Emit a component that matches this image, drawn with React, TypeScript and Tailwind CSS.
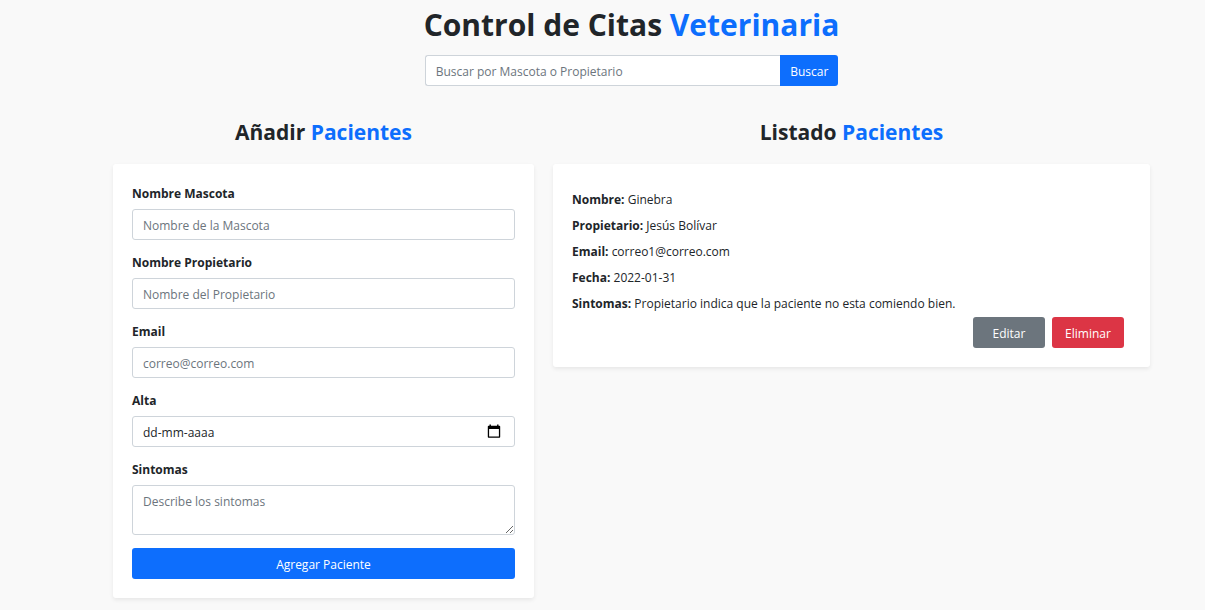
import type { InputHTMLAttributes, ReactNode } from "react";

const control =
  "w-full rounded-[3px] border border-[#ced4da] bg-white px-[10px] text-[#212529] placeholder:text-[#6c757d] outline-none focus:border-blue-400";

function Heading({ first, second }: { first: string; second: string }) {
  return (
    <h2 className="mb-[18px] text-center text-[21px] leading-7 font-bold">
      {first} <span className="text-[#0d6efd]">{second}</span>
    </h2>
  );
}

function Group({ id, label, children }: { id: string; label: string; children: ReactNode }) {
  return (
    <div className="mb-[13px] flex flex-col">
      <label htmlFor={id} className="mb-[6px] self-start leading-[19px] font-bold">
        {label}
      </label>
      {children}
    </div>
  );
}

function Field({ id, label, ...rest }: { id: string; label: string } & InputHTMLAttributes<HTMLInputElement>) {
  return (
    <Group id={id} label={label}>
      <input id={id} className={`${control} h-[31px] pt-[2px]`} {...rest} />
    </Group>
  );
}

function CalendarIcon() {
  return (
    <svg width="14" height="15" viewBox="0 0 14 15" aria-hidden="true">
      <path d="M2.5 0.5h1.4v2H2.5zM10.1 0.5h1.4v2h-1.4z" fill="#000" />
      <path
        d="M1.6 1.8h10.8c.5 0 .8.3.8.8v10.2c0 .6-.4 1-1 1H1.8c-.6 0-1-.4-1-1V2.6c0-.5.3-.8.8-.8zM2.1 5v7.6h9.8V5z"
        fill="#000"
        fillRule="evenodd"
      />
    </svg>
  );
}

const patient = [
  ["Nombre", "Ginebra"],
  ["Propietario", "Jesús Bolívar"],
  ["Email", "correo1@correo.com"],
  ["Fecha", "2022-01-31"],
  ["Sintomas", "Propietario indica que la paciente no esta comiendo bien."],
];

export default function App() {
  return (
    <div className="min-h-screen bg-[#f9f9f9] pr-[55px] pl-[113px] font-['Open_Sans','Noto_Sans',sans-serif] text-[12px] text-[#212529]">
      <header className="mx-auto flex w-fit max-w-full flex-col pt-[6px]">
        <h1 className="text-center text-[30px] leading-[38px] font-bold">
          Control de Citas <span className="text-[#0d6efd]">Veterinaria</span>
        </h1>
        <form className="mx-px mt-[11px] flex" onSubmit={(e) => e.preventDefault()}>
          <input
            type="search"
            aria-label="Buscar por Mascota o Propietario"
            placeholder="Buscar por Mascota o Propietario"
            className="h-[31px] min-w-0 flex-1 rounded-l-[3px] border border-r-0 border-[#ced4da] bg-white px-[10px] pt-[2px] outline-none placeholder:text-[#6c757d]"
          />
          <button className="h-[31px] rounded-r-[3px] bg-[#0d6efd] px-[10px] pt-[2px] text-white">Buscar</button>
        </form>
      </header>

      <main className="mt-8 grid items-start gap-x-[19px] gap-y-8 pb-3 md:grid-cols-[421fr_597fr]">
        <section>
          <Heading first="Añadir" second="Pacientes" />
          <form
            className="rounded-[3px] bg-white px-[19px] pt-[20px] pb-[19px] shadow-[0_2px_4px_rgba(0,0,0,0.075)]"
            onSubmit={(e) => e.preventDefault()}
          >
            <Field id="mascota" label="Nombre Mascota" placeholder="Nombre de la Mascota" />
            <Field id="propietario" label="Nombre Propietario" placeholder="Nombre del Propietario" />
            <Field id="email" label="Email" type="email" placeholder="correo@correo.com" />
            <Group id="alta" label="Alta">
              <div className="relative">
                <input
                  id="alta"
                  className="h-[31px] w-full rounded-[3px] border border-[#ced4da] bg-white px-[10px] pt-[2px] outline-none placeholder:text-[#212529] focus:border-blue-400"
                  placeholder="dd-mm-aaaa"
                />
                <button type="button" aria-label="Abrir calendario" className="absolute top-2 right-[14px]">
                  <CalendarIcon />
                </button>
              </div>
            </Group>
            <Group id="sintomas" label="Sintomas">
              <textarea
                id="sintomas"
                className={`${control} h-[50px] resize-y py-[7px] leading-[18px]`}
                placeholder="Describe los sintomas"
              />
            </Group>
            <button className="h-[31px] w-full rounded-[3px] bg-[#0d6efd] pt-[2px] text-white">Agregar Paciente</button>
          </form>
        </section>

        <section>
          <Heading first="Listado" second="Pacientes" />
          <article className="rounded-[3px] bg-white px-[19px] pt-[26px] pb-[19px] shadow-[0_2px_4px_rgba(0,0,0,0.075)]">
            <div className="flex flex-col gap-[7px] leading-[19px]">
              {patient.map(([name, value]) => (
                <p key={name}>
                  <strong>{name}:</strong> {value}
                </p>
              ))}
            </div>
            <div className="mt-1 mr-[7px] flex justify-end gap-[7px] text-white">
              <button className="h-[31px] w-[72px] rounded-[3px] bg-[#6c757d] pt-[2px]">Editar</button>
              <button className="h-[31px] w-[72px] rounded-[3px] bg-[#dc3545] pt-[2px]">Eliminar</button>
            </div>
          </article>
        </section>
      </main>
    </div>
  );
}
